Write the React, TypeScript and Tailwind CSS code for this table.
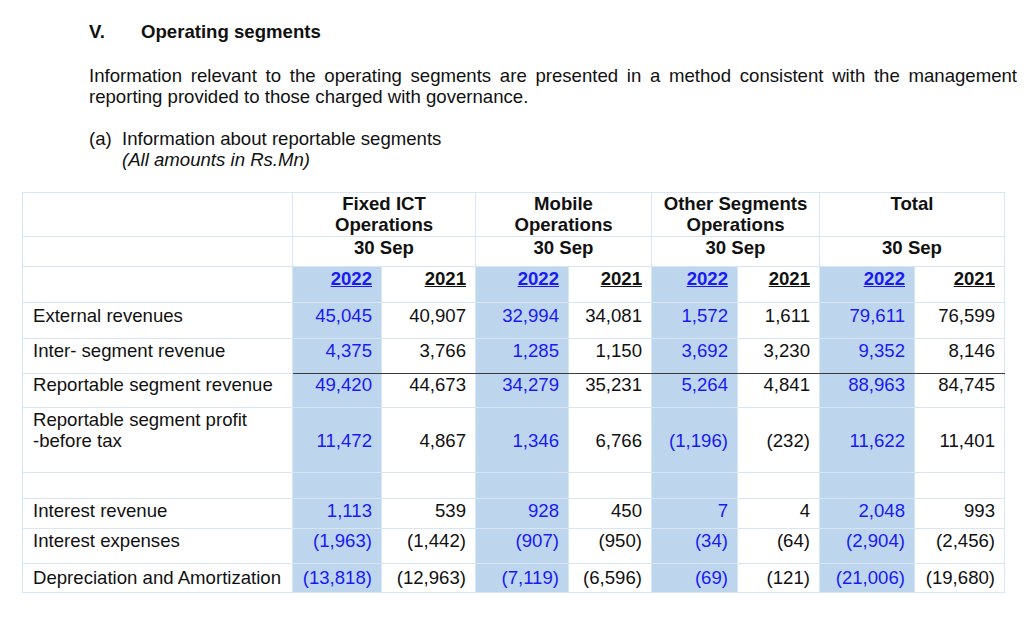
const FONT = "font-['Liberation_Sans',Arial,sans-serif]";

type Row = {
  label: string[];
  values: string[];
  h: string;
  pt: string;
  numPt?: string;
  rule?: boolean;
};

const ROWS: Row[] = [
  { label: ["External revenues"], values: ["45,045", "40,907", "32,994", "34,081", "1,572", "1,611", "79,611", "76,599"], h: "h-[36px]", pt: "pt-[2px]" },
  { label: ["Inter- segment revenue"], values: ["4,375", "3,766", "1,285", "1,150", "3,692", "3,230", "9,352", "8,146"], h: "h-[35px]", pt: "pt-[1px]", rule: true },
  { label: ["Reportable segment revenue"], values: ["49,420", "44,673", "34,279", "35,231", "5,264", "4,841", "88,963", "84,745"], h: "h-[34px]", pt: "pt-0" },
  { label: ["Reportable segment profit", "-before tax"], values: ["11,472", "4,867", "1,346", "6,766", "(1,196)", "(232)", "11,622", "11,401"], h: "h-[65px]", pt: "pt-[1px]", numPt: "pt-[22px]" },
  { label: [], values: ["", "", "", "", "", "", "", ""], h: "h-[26px]", pt: "pt-0" },
  { label: ["Interest revenue"], values: ["1,113", "539", "928", "450", "7", "4", "2,048", "993"], h: "h-[30px]", pt: "pt-[1px]" },
  { label: ["Interest expenses"], values: ["(1,963)", "(1,442)", "(907)", "(950)", "(34)", "(64)", "(2,904)", "(2,456)"], h: "h-[35px]", pt: "pt-[1px]" },
  { label: ["Depreciation and Amortization"], values: ["(13,818)", "(12,963)", "(7,119)", "(6,596)", "(69)", "(121)", "(21,006)", "(19,680)"], h: "h-[29px]", pt: "pt-[3px]" },
];

const GROUPS = [
  ["Fixed ICT", "Operations"],
  ["Mobile", "Operations"],
  ["Other Segments", "Operations"],
  ["Total"],
];

const WIDTHS = [270, 89, 94, 93, 83, 86, 82, 95, 90];

const cell = "border border-[#d8e5f4] align-top leading-[21px] p-0";

export default function App() {
  return (
    <div className={`${FONT} bg-white text-[18.6px] text-[#111] w-[1024px] h-[627px] pt-[22px]`}>
      <h2 className="ml-[89px] flex font-bold leading-[20px]">
        <span className="w-[52px]">V.</span>
        <span>Operating segments</span>
      </h2>

      <p className="ml-[89px] w-[928px] mt-[23px] leading-[21px] text-justify">
        Information relevant to the operating segments are presented in a method consistent with the management
        reporting provided to those charged with governance.
      </p>

      <div className="ml-[89px] mt-[21px] flex leading-[21px]">
        <span className="w-[33px]">(a)</span>
        <div>
          <div>Information about reportable segments</div>
          <div className="italic">(All amounts in Rs.Mn)</div>
        </div>
      </div>

      <table className="ml-[22px] mt-[22px] w-[982px] table-fixed border-collapse">
        <colgroup>
          {WIDTHS.map((w, i) => (
            <col key={i} style={{ width: w }} />
          ))}
        </colgroup>
        <thead>
          <tr className="h-[44px]">
            <th className={cell} />
            {GROUPS.map((g, i) => (
              <th key={i} colSpan={2} className={`${cell} font-bold text-center`}>
                {g.map((line) => (
                  <div key={line}>{line}</div>
                ))}
              </th>
            ))}
          </tr>
          <tr className="h-[30px]">
            <th className={cell} />
            {GROUPS.map((_, i) => (
              <th key={i} colSpan={2} className={`${cell} font-bold text-center`}>
                30 Sep
              </th>
            ))}
          </tr>
          <tr className="h-[36px]">
            <th className={cell} />
            {GROUPS.map((_, i) => (
              <>
                <th key={`a${i}`} className={`${cell} bg-[#bdd6ee] text-right pr-[9px] pt-[1px] font-bold`}>
                  <span className="underline text-[#1a1af5]">2022</span>
                </th>
                <th key={`b${i}`} className={`${cell} text-right pr-[9px] pt-[1px] font-bold`}>
                  <span className="underline">2021</span>
                </th>
              </>
            ))}
          </tr>
        </thead>
        <tbody>
          {ROWS.map((r, ri) => (
            <tr key={ri} className={r.h}>
              <td className={`${cell} ${r.pt} pl-[10px]`}>
                {r.label.map((l) => (
                  <div key={l}>{l}</div>
                ))}
              </td>
              {r.values.map((v, vi) => (
                <td
                  key={vi}
                  className={`${cell} ${r.numPt ?? r.pt} pr-[9px] text-right ${
                    vi % 2 === 0 ? "bg-[#bdd6ee] text-[#1a1af5]" : ""
                  } ${r.rule ? "border-b-[#3c3c3c]" : ""}`}
                >
                  {v}
                </td>
              ))}
            </tr>
          ))}
        </tbody>
      </table>
    </div>
  );
}
